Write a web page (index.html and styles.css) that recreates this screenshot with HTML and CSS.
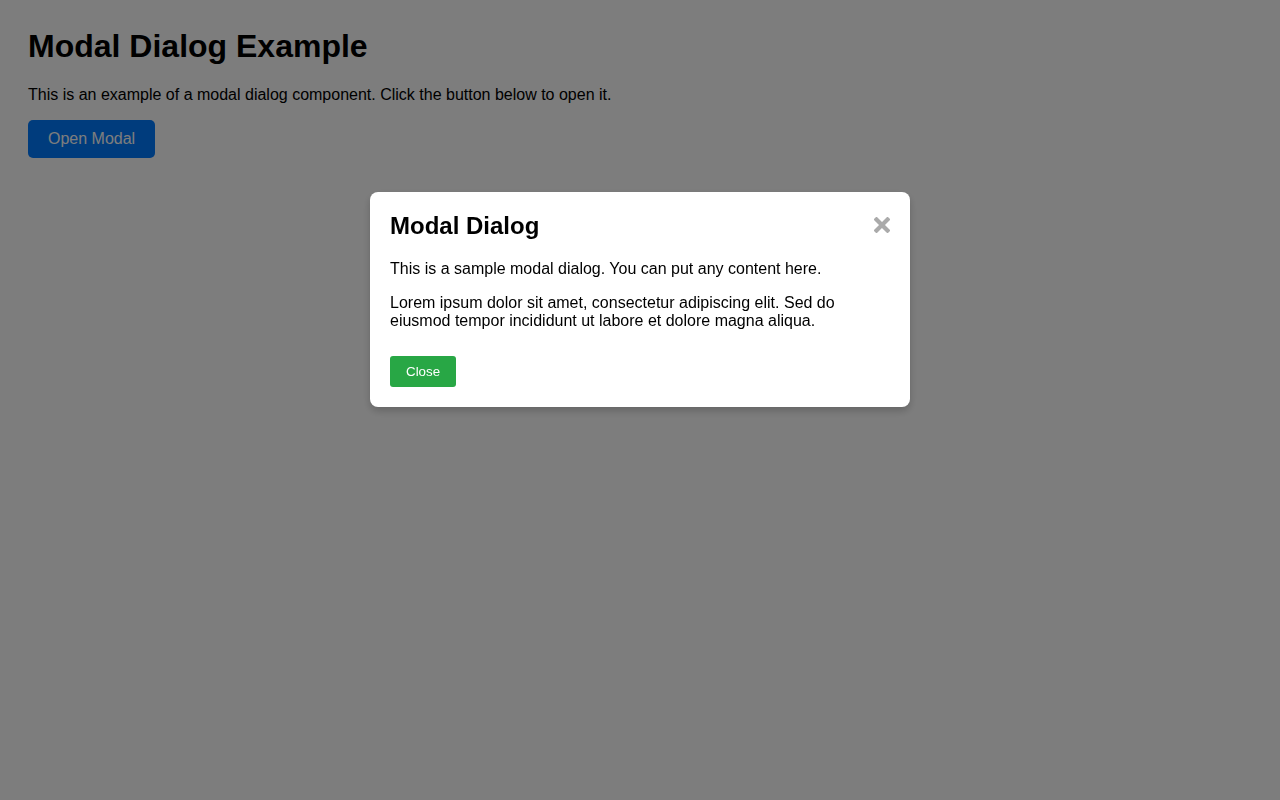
FILE: index.html
```html
<!DOCTYPE html>
<html lang="en">
<head>
<meta charset="utf-8">
<title>Modal Dialog Example</title>
<link rel="stylesheet" href="styles.css">
</head>
<body>
  <main class="page">
    <h1 class="page-title">Modal Dialog Example</h1>
    <p class="page-text">This is an example of a modal dialog component. Click the button below to open it.</p>
    <button class="btn btn-primary" type="button">Open Modal</button>
  </main>

  <div class="overlay">
    <div class="modal" role="dialog" aria-labelledby="modal-title">
      <div class="modal-header">
        <h2 class="modal-title" id="modal-title">Modal Dialog</h2>
        <span class="modal-x" aria-label="Close">
          <svg width="16" height="16" viewBox="0 0 16 16"><path d="M2.5 2.5 L13.5 13.5 M13.5 2.5 L2.5 13.5" stroke="#aaaaaa" stroke-width="4.2" stroke-linecap="square" fill="none"/></svg>
        </span>
      </div>
      <div class="modal-body">
        <p>This is a sample modal dialog. You can put any content here.</p>
        <p>Lorem ipsum dolor sit amet, consectetur adipiscing elit. Sed do eiusmod tempor incididunt ut labore et dolore magna aliqua.</p>
      </div>
      <div class="modal-footer">
        <button class="btn btn-success" type="button">Close</button>
      </div>
    </div>
  </div>
</body>
</html>
```

FILE: styles.css
```css
html, body {
  margin: 0;
  padding: 0;
}
body {
  font-family: "Liberation Sans", Arial, sans-serif;
  background: #ffffff;
  color: #000;
  height: 800px;
}
.page {
  padding: 28px;
}
.page-title {
  font-size: 32px;
  font-weight: bold;
  margin: 0 0 21px;
  line-height: 37px;
}
.page-text {
  font-size: 16px;
  margin: 0 0 16px;
  line-height: 18px;
}
.btn {
  font-family: "Liberation Sans", Arial, sans-serif;
  border: none;
  color: #fff;
  cursor: pointer;
}
.btn-primary {
  background: #007bff;
  font-size: 16px;
  line-height: 18px;
  padding: 10px 20px;
  border-radius: 5px;
}
.btn-success {
  background: #28a745;
  font-size: 13.33px;
  line-height: 17px;
  padding: 7px 16px;
  border-radius: 3px;
}
.overlay {
  position: fixed;
  inset: 0;
  background: rgba(0, 0, 0, 0.51);
}
.modal {
  width: 500px;
  margin: 192px auto 0;
  padding: 20px;
  background: #fff;
  border-radius: 8px;
  box-shadow: 0 4px 8px rgba(0, 0, 0, 0.2);
}
.modal-header {
  display: flex;
  justify-content: space-between;
  align-items: flex-start;
  margin-bottom: 20px;
}
.modal-title {
  margin: 0;
  font-size: 24px;
  line-height: 28px;
  font-weight: bold;
}
.modal-x {
  display: flex;
  width: 16px;
  height: 16px;
  margin-top: 5px;
}
.modal-body p {
  margin: 0 0 16px;
  font-size: 16px;
  line-height: 18px;
}
.modal-body p:last-child {
  margin-bottom: 26px;
}
.modal-footer {
  display: flex;
}
```
